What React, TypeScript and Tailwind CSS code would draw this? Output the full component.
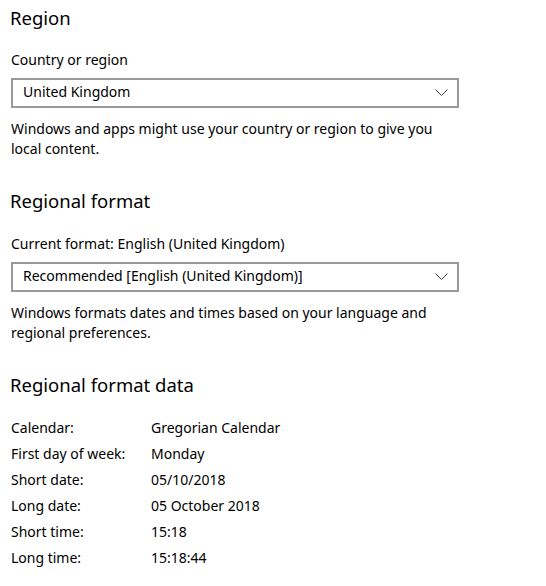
const font = { fontFamily: '"Noto Sans", "Open Sans", sans-serif' };

function Chevron() {
  return (
    <svg width="13" height="7" viewBox="0 0 13 7" fill="none" className="shrink-0">
      <path d="M0.5 0.5 L6.5 6.5 L12.5 0.5" stroke="#444" strokeWidth="1" />
    </svg>
  );
}

function Select({ value }: { value: string }) {
  return (
    <div className="flex h-[30px] w-[448px] items-center justify-between border-2 border-[#999] bg-white pb-[2px] pl-[10px] pr-[9px]">
      <span className="text-[14px] leading-[20px] text-black">{value}</span>
      <Chevron />
    </div>
  );
}

const rows = [
  ["Calendar:", "Gregorian Calendar"],
  ["First day of week:", "Monday"],
  ["Short date:", "05/10/2018"],
  ["Long date:", "05 October 2018"],
  ["Short time:", "15:18"],
  ["Long time:", "15:18:44"],
];

export default function App() {
  return (
    <div className="h-[586px] w-[546px] overflow-hidden bg-white pl-[10px] text-black" style={font}>
      <h2 className="pt-[4px] text-[18.5px] leading-[28px]">Region</h2>
      <p className="mt-[18px] pl-[1px] text-[14px] leading-[20px]">Country or region</p>
      <div className="mt-[8px] pl-[1px]">
        <Select value="United Kingdom" />
      </div>
      <p className="mt-[11px] w-[440px] pl-[1px] text-[14px] leading-[20px]">
        Windows and apps might use your country or region to give you local content.
      </p>

      <h2 className="mt-[28px] text-[18.5px] leading-[28px]">Regional format</h2>
      <p className="mt-[19px] pl-[1px] text-[14px] leading-[20px]">Current format: English (United Kingdom)</p>
      <div className="mt-[8px] pl-[1px]">
        <Select value="Recommended [English (United Kingdom)]" />
      </div>
      <p className="mt-[11px] w-[440px] pl-[1px] text-[14px] leading-[20px]">
        Windows formats dates and times based on your language and regional preferences.
      </p>

      <h2 className="mt-[28px] text-[18.5px] leading-[28px]">Regional format data</h2>
      <div className="mt-[19px] flex flex-col gap-[6px] pl-[1px]">
        {rows.map(([k, v]) => (
          <div key={k} className="flex text-[14px] leading-[20px]">
            <span className="w-[140px]">{k}</span>
            <span>{v}</span>
          </div>
        ))}
      </div>
    </div>
  );
}
